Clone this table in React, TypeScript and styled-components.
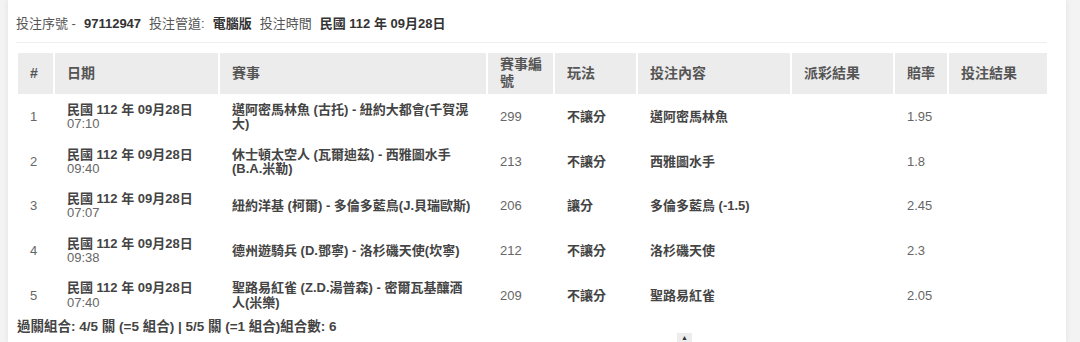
import React from "react";
import styled, { createGlobalStyle } from "styled-components";

const GlobalStyle = createGlobalStyle`
  html, body {
    margin: 0;
    padding: 0;
    background: #f3f3f3;
  }
  body {
    font-family: "Liberation Sans", "Noto Sans CJK TC", sans-serif;
    color: #555;
  }
`;

const Panel = styled.div`
  position: relative;
  margin-left: 8px;
  width: 1058px;
  min-height: 342px;
  box-sizing: border-box;
  padding: 0 17px 0 8px;
  background: #fff;
  box-shadow: 0 0 6px rgba(0, 0, 0, 0.08);
`;

const InfoBar = styled.div`
  display: flex;
  align-items: center;
  gap: 8px;
  padding: 15px 0 9px;
  margin-right: 2px;
  line-height: 18px;
  font-size: 13px;
  border-bottom: 1px solid #eee;
`;

const InfoLabel = styled.span`
  color: #555;
`;

const InfoValue = styled.span`
  color: #333;
  font-weight: bold;
`;

const Table = styled.table`
  width: 1033px;
  margin-top: 8px;
  table-layout: fixed;
  border-collapse: separate;
  border-spacing: 2px;
`;

const Th = styled.th<{ $w: number }>`
  width: ${({ $w }) => $w}px;
  box-sizing: border-box;
  height: 41px;
  padding: 3px 4px 4px 12px;
  background: #ececec;
  color: #555;
  font-size: 14px;
  line-height: 17px;
  font-weight: bold;
  text-align: left;
  vertical-align: middle;
`;

const Td = styled.td<{ $strong?: boolean; $muted?: boolean }>`
  box-sizing: border-box;
  padding: 7px 4px 7px 12px;
  font-size: 13px;
  line-height: 14.3px;
  vertical-align: middle;
  color: ${({ $muted }) => ($muted ? "#666" : "#444")};
  font-weight: ${({ $strong }) => ($strong ? "bold" : "normal")};
`;

const GameCell = styled(Td)`
  padding-right: 14px;
`;

const DateMain = styled.div`
  color: #444;
  font-weight: bold;
`;

const DateTime = styled.div`
  color: #666;
`;

const Footer = styled.div`
  padding-left: 1px;
  font-size: 13.5px;
  line-height: 16px;
  font-weight: bold;
  color: #444;
`;

const TopButton = styled.div`
  position: absolute;
  left: 669px;
  top: 333px;
  width: 15px;
  height: 15px;
  background: #ededed;
  display: flex;
  justify-content: center;
  font-size: 7px;
  line-height: 9px;
  color: #333;
`;

const columns = [
  { label: "#", w: 35 },
  { label: "日期", w: 163 },
  { label: "賽事", w: 266 },
  { label: "賽事編號", w: 65 },
  { label: "玩法", w: 81 },
  { label: "投注內容", w: 152 },
  { label: "派彩結果", w: 101 },
  { label: "賠率", w: 52 },
  { label: "投注結果", w: 98 },
];

const bets = [
  {
    time: "07:10",
    game: "邁阿密馬林魚 (古托) - 紐約大都會(千賀滉大)",
    no: "299",
    type: "不讓分",
    pick: "邁阿密馬林魚",
    odds: "1.95",
  },
  {
    time: "09:40",
    game: "休士頓太空人 (瓦爾迪茲) - 西雅圖水手(B.A.米勒)",
    no: "213",
    type: "不讓分",
    pick: "西雅圖水手",
    odds: "1.8",
  },
  {
    time: "07:07",
    game: "紐約洋基 (柯爾) - 多倫多藍鳥(J.貝瑞歐斯)",
    no: "206",
    type: "讓分",
    pick: "多倫多藍鳥 (-1.5)",
    odds: "2.45",
  },
  {
    time: "09:38",
    game: "德州遊騎兵 (D.鄧寧) - 洛杉磯天使(坎寧)",
    no: "212",
    type: "不讓分",
    pick: "洛杉磯天使",
    odds: "2.3",
  },
  {
    time: "07:40",
    game: "聖路易紅雀 (Z.D.湯普森) - 密爾瓦基釀酒人(米樂)",
    no: "209",
    type: "不讓分",
    pick: "聖路易紅雀",
    odds: "2.05",
  },
];

const App: React.FC = () => {
  return (
    <>
      <GlobalStyle />
      <Panel>
        <InfoBar>
          <InfoLabel>投注序號 -</InfoLabel>
          <InfoValue>97112947</InfoValue>
          <InfoLabel>投注管道:</InfoLabel>
          <InfoValue>電腦版</InfoValue>
          <InfoLabel>投注時間</InfoLabel>
          <InfoValue>民國 112 年 09月28日</InfoValue>
        </InfoBar>
        <Table>
          <thead>
            <tr>
              {columns.map((c) => (
                <Th key={c.label} $w={c.w}>
                  {c.label}
                </Th>
              ))}
            </tr>
          </thead>
          <tbody>
            {bets.map((b, i) => (
              <tr key={b.no}>
                <Td $muted>{i + 1}</Td>
                <Td>
                  <DateMain>民國 112 年 09月28日</DateMain>
                  <DateTime>{b.time}</DateTime>
                </Td>
                <GameCell $strong>{b.game}</GameCell>
                <Td $muted>{b.no}</Td>
                <Td $strong>{b.type}</Td>
                <Td $strong>{b.pick}</Td>
                <Td />
                <Td $muted>{b.odds}</Td>
                <Td />
              </tr>
            ))}
          </tbody>
        </Table>
        <Footer>過關組合: 4/5 關 (=5 組合) | 5/5 關 (=1 組合)組合數: 6</Footer>
        <TopButton>▲</TopButton>
      </Panel>
    </>
  );
};

export default App;
